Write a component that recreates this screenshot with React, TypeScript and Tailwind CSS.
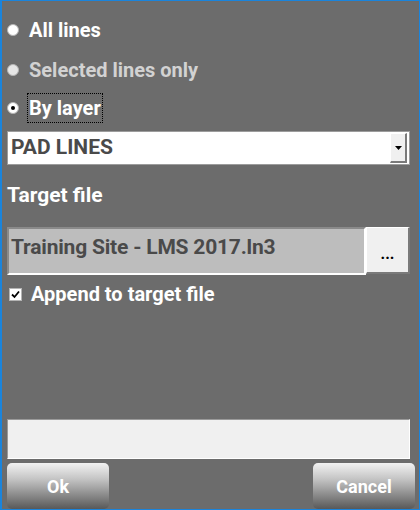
import React from "react";

function Radio({ checked, disabled }: { checked?: boolean; disabled?: boolean }) {
  return (
    <span
      className={`flex h-3 w-3 shrink-0 items-center justify-center rounded-full border border-[#b4b4b4] ${
        disabled ? "bg-[#e6e6e6]" : "bg-white"
      }`}
    >
      {checked ? <span className="h-1 w-1 rounded-full bg-black" /> : null}
    </span>
  );
}

function Check() {
  return (
    <span className="flex h-[13px] w-[13px] shrink-0 items-center justify-center border border-[#b4b4b4] bg-white">
      <svg width="9" height="9" viewBox="0 0 9 9" aria-hidden="true">
        <path d="M1 4.5 L3.5 7 L8 1.5" fill="none" stroke="#000" strokeWidth="1.8" />
      </svg>
    </span>
  );
}

export default function App() {
  return (
    <div className="flex h-[510px] w-[420px] flex-col border-b border-l-2 border-r border-t border-[#1a84dc] bg-[#6c6c6c] pl-[5px] pr-[9px] font-['Roboto',sans-serif] text-[20px] font-bold text-white">
      <div className="mt-[14px] flex h-[30px] items-center">
        <Radio />
        <span className="ml-[10px]">All lines</span>
      </div>
      <div className="mt-[10px] flex h-[30px] items-center">
        <Radio disabled />
        <span className="ml-[10px] text-[#d2d2d2]">Selected lines only</span>
      </div>
      <div className="mt-[8px] flex h-[30px] items-center">
        <Radio checked />
        <span className="ml-[8px] border border-dotted border-black px-[1px] leading-[28px]">
          By layer
        </span>
      </div>

      <div className="mt-[8px] flex h-[34px] items-center border border-[#9c9c9c] bg-white pl-[3px] pr-[2px]">
        <span className="flex-1 text-[21px] text-[#4a4a4a]">PAD LINES</span>
        <span className="flex h-[30px] w-[17px] items-center justify-center border-b-2 border-l border-r-2 border-t border-b-[#7a7a7a] border-l-white border-r-[#7a7a7a] border-t-white bg-[#f0f0f0]">
          <svg width="7" height="4" viewBox="0 0 7 4" aria-hidden="true">
            <path d="M0 0 H7 L3.5 4 Z" fill="#000" />
          </svg>
        </span>
      </div>

      <div className="mt-[18px] text-[21px] leading-[24px]">Target file</div>

      <div className="mt-[20px] flex h-[48px]">
        <div className="flex flex-1 items-start border-b-2 border-l-2 border-r-2 border-t-2 border-b-white border-l-[#8a8a8a] border-r-white border-t-[#8a8a8a] bg-[#bdbdbd] pl-[2px] pt-[3px] text-[21px] tracking-[-0.2px] text-[#4a4a4a]">
          Training Site - LMS 2017.ln3
        </div>
        <div className="flex h-[47px] w-[44px] items-end justify-center border-b-2 border-l border-r-2 border-t border-b-[#7a7a7a] border-l-white border-r-[#7a7a7a] border-t-white bg-[#f0f0f0] pb-[10px] text-[16px] leading-none text-black">
          ...
        </div>
      </div>

      <div className="mt-[8px] flex h-[22px] items-center">
        <span className="ml-[2px]">
          <Check />
        </span>
        <span className="ml-[9px]">Append to target file</span>
      </div>

      <div className="flex-1" />

      <div className="h-[40px] border-b border-l border-r border-t border-b-white border-l-[#9a9a9a] border-r-white border-t-[#9a9a9a] bg-[#f0f0f0]" />

      <div className="mt-[4px] flex h-[46px] justify-between">
        <button
          type="button"
          className="flex w-[102px] items-center justify-center rounded-[5px] bg-[linear-gradient(to_bottom,#f2f2f2_0%,#c4c4c4_35%,#8a8a8a_70%,#595959_100%)] text-[18px] font-bold text-white"
        >
          Ok
        </button>
        <button
          type="button"
          className="-mr-[5px] flex w-[102px] items-center justify-center rounded-[5px] bg-[linear-gradient(to_bottom,#f2f2f2_0%,#c4c4c4_35%,#8a8a8a_70%,#595959_100%)] text-[18px] font-bold text-white"
        >
          Cancel
        </button>
      </div>
    </div>
  );
}
